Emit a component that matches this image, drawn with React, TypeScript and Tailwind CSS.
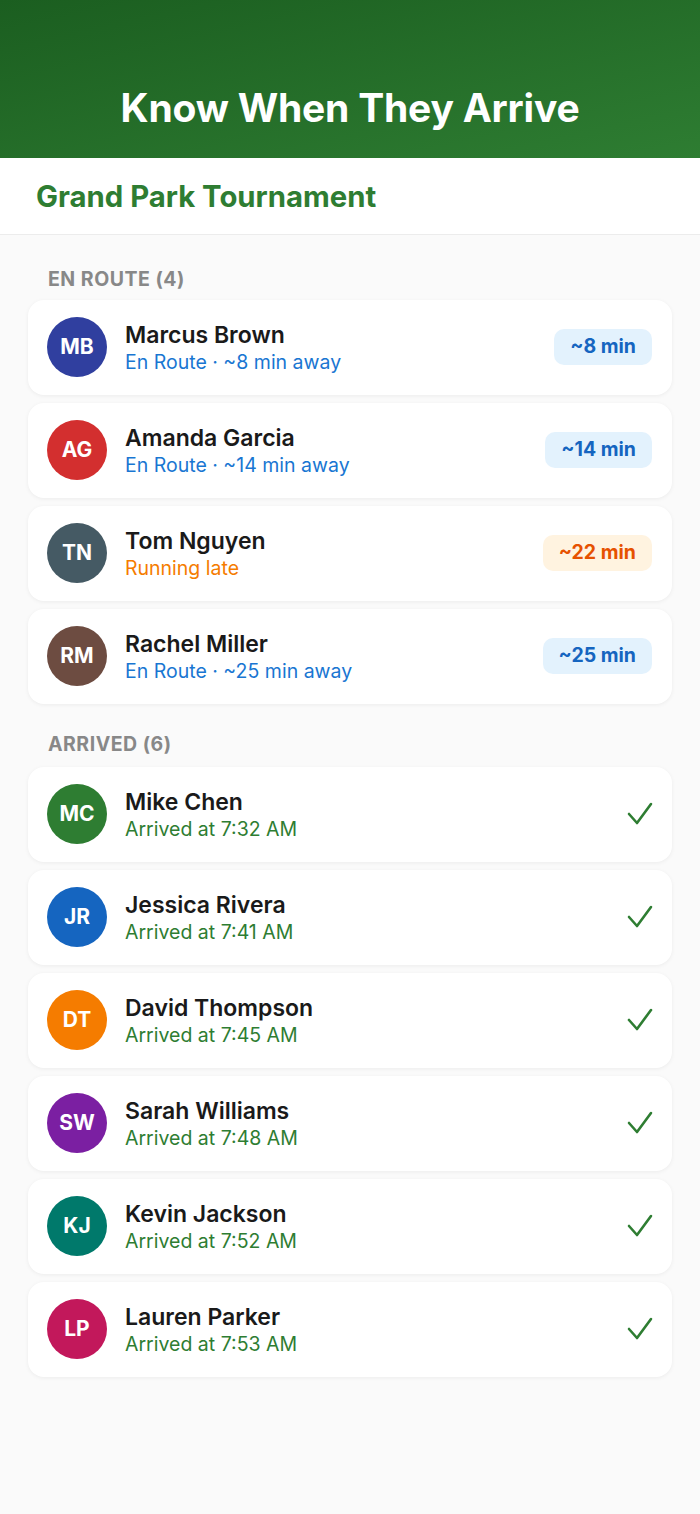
import React from "react";

type EnRoute = { initials: string; name: string; sub: string; badge: string; color: string; late?: boolean };
type Arrived = { initials: string; name: string; time: string; color: string };

const enRoute: EnRoute[] = [
  { initials: "MB", name: "Marcus Brown", sub: "En Route · ~8 min away", badge: "~8 min", color: "#303f9f" },
  { initials: "AG", name: "Amanda Garcia", sub: "En Route · ~14 min away", badge: "~14 min", color: "#d32f2f" },
  { initials: "TN", name: "Tom Nguyen", sub: "Running late", badge: "~22 min", color: "#455a64", late: true },
  { initials: "RM", name: "Rachel Miller", sub: "En Route · ~25 min away", badge: "~25 min", color: "#6d4c41" },
];

const arrived: Arrived[] = [
  { initials: "MC", name: "Mike Chen", time: "7:32 AM", color: "#2e7d32" },
  { initials: "JR", name: "Jessica Rivera", time: "7:41 AM", color: "#1565c0" },
  { initials: "DT", name: "David Thompson", time: "7:45 AM", color: "#f57c00" },
  { initials: "SW", name: "Sarah Williams", time: "7:48 AM", color: "#7b1fa2" },
  { initials: "KJ", name: "Kevin Jackson", time: "7:52 AM", color: "#00796b" },
  { initials: "LP", name: "Lauren Parker", time: "7:53 AM", color: "#c2185b" },
];

function Avatar({ initials, color }: { initials: string; color: string }) {
  return (
    <div
      className="w-[60px] h-[60px] rounded-full flex items-center justify-center text-white font-bold text-[21px] shrink-0"
      style={{ backgroundColor: color }}
    >
      {initials}
    </div>
  );
}

function Card({ children }: { children: React.ReactNode }) {
  return (
    <div className="bg-white rounded-[16px] shadow-[0_1px_4px_rgba(0,0,0,0.06)] flex items-center pl-[19px] pr-[20px] pt-[17px] pb-[18px] gap-[18px]">
      {children}
    </div>
  );
}

function Check() {
  return (
    <svg width="28" height="28" viewBox="0 0 28 28" className="mr-[-2px]">
      <polyline points="3,14 11,23 25,4" fill="none" stroke="#2e7d32" strokeWidth="2.6" strokeLinecap="round" strokeLinejoin="round" />
    </svg>
  );
}

export default function App() {
  return (
    <div className="min-h-[1514px] bg-[#fafafa]" style={{ fontFamily: "Inter, 'Noto Sans', sans-serif" }}>
      <div className="h-[158px] bg-gradient-to-br from-[#1b5e20] to-[#2e7d32] flex items-end justify-center pb-[27px]">
        <h1 className="text-white font-bold text-[39px] leading-[46px] tracking-[-0.2px]">Know When They Arrive</h1>
      </div>
      <div className="bg-white h-[77px] border-b border-[#ececec] flex items-center px-[36px]">
        <h2 className="text-[#2e7d32] font-bold text-[29.3px] leading-[36px] mt-[2px]">Grand Park Tournament</h2>
      </div>
      <div className="px-[28px] pt-[32px]">
        <div className="pl-[20px] text-[19.5px] leading-[24px] font-bold text-[#888888] tracking-[0.5px] mb-[9px]">EN ROUTE (4)</div>
        <div className="flex flex-col gap-[8px]">
          {enRoute.map((p) => (
            <Card key={p.initials}>
              <Avatar initials={p.initials} color={p.color} />
              <div className="flex-1 min-w-0 mt-[3px]">
                <div className="text-[23px] leading-[27px] font-semibold text-[#1a1a1a]">{p.name}</div>
                <div className={`text-[19.5px] leading-[27px] ${p.late ? "text-[#f57c00]" : "text-[#1976d2]"}`}>{p.sub}</div>
              </div>
              <div
                className={`h-[36px] px-[16px] rounded-[10px] flex items-center text-[19.5px] font-bold ${
                  p.late ? "bg-[#fff3e0] text-[#e65100]" : "bg-[#e3f2fd] text-[#1565c0]"
                }`}
              >
                {p.badge}
              </div>
            </Card>
          ))}
        </div>
        <div className="pl-[20px] text-[19.5px] leading-[24px] font-bold text-[#888888] tracking-[0.5px] mt-[28px] mb-[11px]">ARRIVED (6)</div>
        <div className="flex flex-col gap-[8px]">
          {arrived.map((p) => (
            <Card key={p.initials}>
              <Avatar initials={p.initials} color={p.color} />
              <div className="flex-1 min-w-0 mt-[3px]">
                <div className="text-[23px] leading-[27px] font-semibold text-[#1a1a1a]">{p.name}</div>
                <div className="text-[19.5px] leading-[27px] text-[#2e7d32]">Arrived at {p.time}</div>
              </div>
              <Check />
            </Card>
          ))}
        </div>
      </div>
    </div>
  );
}
